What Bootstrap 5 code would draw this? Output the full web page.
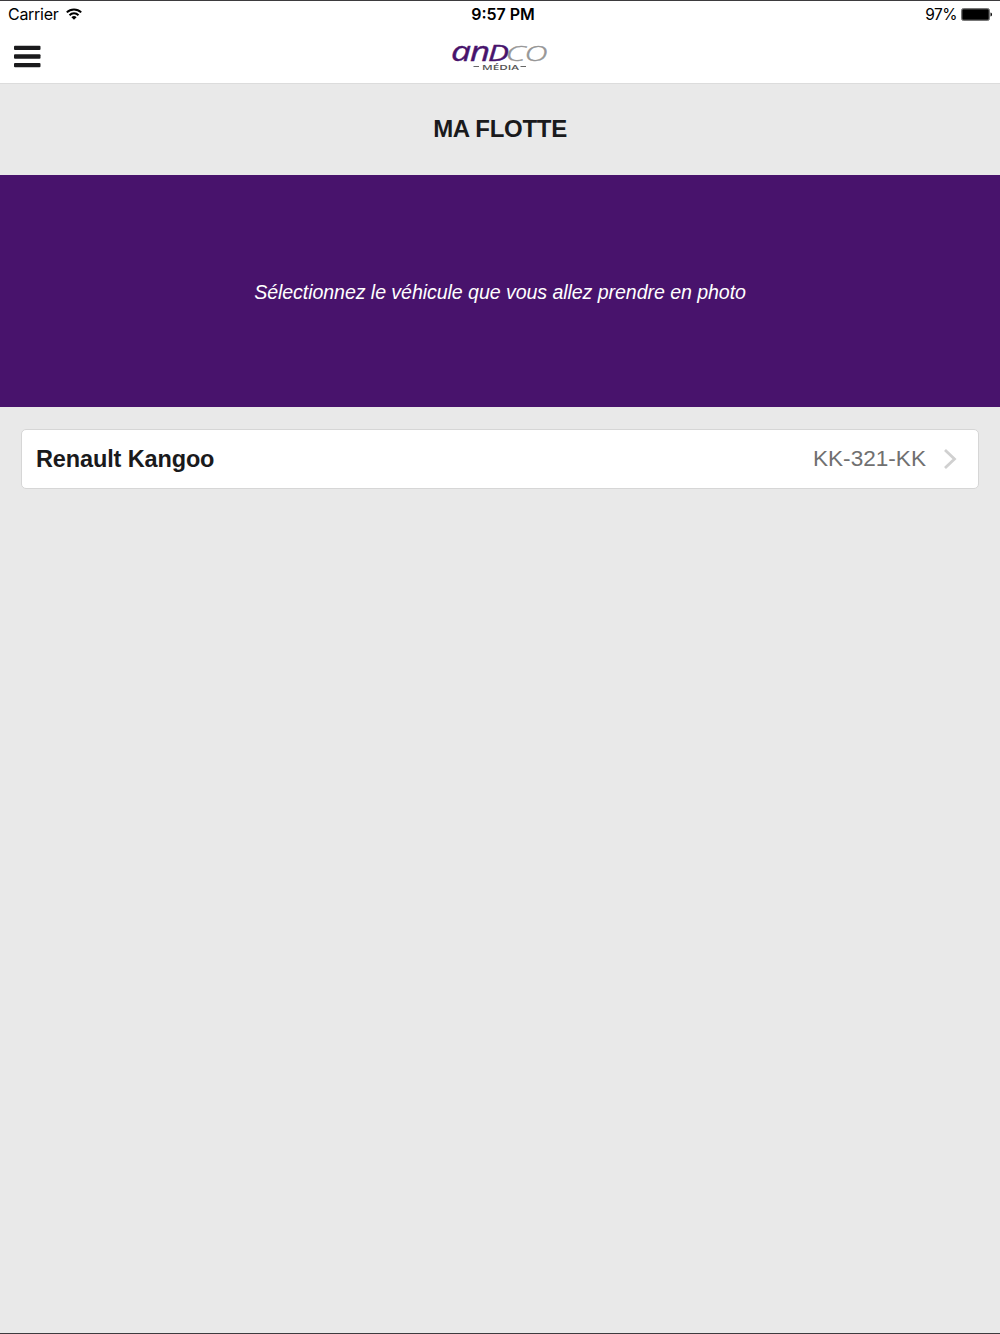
<!DOCTYPE html>
<html lang="fr">
<head>
    <meta charset="UTF-8">
    <meta name="viewport" content="width=device-width, initial-scale=1.0">
    <title>Ma flotte</title>
    <link href="https://cdn.jsdelivr.net/npm/bootstrap@5.3.1/dist/css/bootstrap.min.css" rel="stylesheet">
    <style>
        body {
            background-color: #e9e9e9;
            color: #1a1a1c;
            font-family: "Liberation Sans", sans-serif;
        }

        .screen {
            border-top: 1px solid #3d3b3e;
            border-bottom: 1px solid #3d3b3e;
        }

        .status-bar {
            height: 27px;
            padding: 0 8px;
            font-family: Inter, sans-serif;
            font-size: 16px;
            line-height: 27px;
            color: #000;
        }

        .status-side {
            flex: 1 1 0;
        }

        .carrier {
            letter-spacing: -.28px;
        }

        .wifi {
            margin: 0 0 1px 7px;
        }

        .status-time {
            padding-left: 6px;
            font-weight: 600;
        }

        .percent {
            font-size: 15.5px;
            letter-spacing: -.5px;
        }

        .app-bar {
            height: 56px;
            padding: 0 13px;
            border-bottom: 1px solid #dcdcdc;
        }

        .page-title {
            height: 91px;
            font-size: 24px;
            letter-spacing: -.3px;
        }

        .banner {
            height: 232px;
            padding-top: 4px;
            background-color: #48136c;
            font-size: 19.6px;
            letter-spacing: -.07px;
        }

        .vehicle-list {
            padding: 22px 21px;
        }

        .vehicle {
            height: 60px;
            padding: 0 20px 0 14px;
            border: 1px solid #d6d6d6;
            border-radius: 5px;
            color: #1a1a1c;
            font-size: 23.5px;
        }

        .model {
            padding-top: 2px;
            letter-spacing: -.13px;
        }

        .plate {
            padding-bottom: 1px;
            color: #707070;
            font-size: 22.6px;
        }

        svg {
            display: block;
            overflow: visible;
        }
    </style>
</head>
<body>

    <div class="screen min-vh-100 d-flex flex-column">
        <header class="bg-white">
            <div class="status-bar d-flex align-items-center">
                <div class="status-side d-flex align-items-center">
                    <span class="carrier">Carrier</span>
                    <svg class="wifi" width="16" height="12" viewBox="0 0 16 12" fill="none" stroke="#000" stroke-width="2">
                        <path d="M.8 4.400a10.300 10.300 0 0 1 14.400 0M3.500 7.200a6.400 6.400 0 0 1 9 0"/>
                        <path d="M8 11.800 5.400 9.200a3.800 3.800 0 0 1 5.200 0Z" fill="#000" stroke="none"/>
                    </svg>
                </div>
                <span class="status-time">9:57 PM</span>
                <div class="status-side d-flex align-items-center justify-content-end gap-1">
                    <span class="percent">97%</span>
                    <svg width="31" height="14" viewBox="0 0 31 14">
                        <rect x=".5" y=".5" width="28" height="12" rx="2" fill="#555" stroke="#777"/>
                        <rect x="1.5" y="1.5" width="26" height="10" rx="1"/>
                        <path d="M29.500 4.500q1.500 0 1.500 2t-1.500 2Z"/>
                    </svg>
                </div>
            </div>

            <!-- Menu button and logo -->
            <nav class="app-bar d-flex align-items-center">
                <div class="status-side">
                    <button type="button" class="btn p-0 border-0" aria-label="Menu">
                        <svg width="28" height="24" viewBox="0 0 28 24" fill="#1a1a1c">
                            <rect x="1" y="1.700" width="26.500" height="4.400" rx="1"/>
                            <rect x="1" y="10.300" width="26.500" height="4.400" rx="1"/>
                            <rect x="1" y="18.900" width="26.500" height="4.400" rx="1"/>
                        </svg>
                    </button>
                </div>
                <svg width="98" height="30" viewBox="0 0 98 30" font-family="Open Sans, sans-serif">
                    <g font-style="italic" font-weight="400" fill="#48136c" stroke="#48136c" stroke-width=".4">
                        <text x="0" y="19.500" font-size="27.500" textLength="20" lengthAdjust="spacingAndGlyphs">a</text>
                        <text x="19" y="19.500" font-size="27.500" textLength="20" lengthAdjust="spacingAndGlyphs">n</text>
                        <text x="37" y="19.500" font-size="21" textLength="21" lengthAdjust="spacingAndGlyphs">D</text>
                    </g>
                    <g font-style="italic" font-weight="300" fill="#969696" stroke="#969696" stroke-width=".4">
                        <text x="54.500" y="19.500" font-size="20.500" textLength="20" lengthAdjust="spacingAndGlyphs">C</text>
                        <text x="73.500" y="19.500" font-size="20.500" textLength="23" lengthAdjust="spacingAndGlyphs">O</text>
                    </g>
                    <text x="31" y="28.500" font-size="7" font-weight="600" fill="#555" textLength="37" lengthAdjust="spacingAndGlyphs">MÉDIA</text>
                    <path d="M22.500 25.500h5.500M69.500 25.500h5.500" stroke="#666"/>
                </svg>
                <div class="status-side"></div>
            </nav>
        </header>

        <main>
            <h1 class="page-title d-flex align-items-center justify-content-center fw-bold m-0"><span>MA FLOTTE</span></h1>

            <div class="banner d-flex align-items-center justify-content-center text-white fst-italic">
                <span>Sélectionnez le véhicule que vous allez prendre en photo</span>
            </div>

            <div class="vehicle-list">
                <a href="#" class="vehicle d-flex align-items-center bg-white text-decoration-none">
                    <span class="model fw-bold me-auto">Renault Kangoo</span>
                    <span class="plate">KK-321-KK</span>
                    <svg class="ms-3" width="16" height="22" viewBox="0 0 16 22" fill="none" stroke="#d0d0d0" stroke-width="2.8">
                        <path d="m3 2 9.500 9L3 20"/>
                    </svg>
                </a>
            </div>
        </main>
    </div>

    <script src="https://cdn.jsdelivr.net/npm/bootstrap@5.3.1/dist/js/bootstrap.bundle.min.js"></script>
</body>
</html>
